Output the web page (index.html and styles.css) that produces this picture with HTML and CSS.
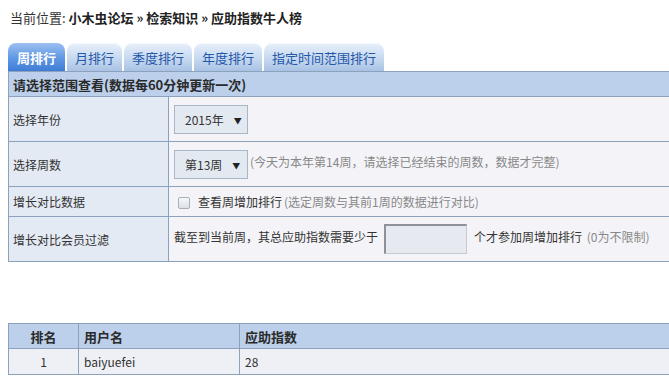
FILE: index.html
```html
<!DOCTYPE html>
<html lang="zh-CN">
<head>
    <meta charset="UTF-8">
    <title>应助指数牛人榜</title>
    <link rel="stylesheet" href="styles.css">
</head>
<body>

<div class="page">
    <div class="crumb">
        当前位置: <b>小木虫论坛 » 检索知识 » 应助指数牛人榜</b>
    </div>

    <ul class="tabs">
        <li class="tab active">周排行</li>
        <li class="tab">月排行</li>
        <li class="tab">季度排行</li>
        <li class="tab">年度排行</li>
        <li class="tab">指定时间范围排行</li>
    </ul>

    <table class="form-table">
        <tr>
            <th colspan="2">请选择范围查看(数据每60分钟更新一次)</th>
        </tr>
        <tr class="tall">
            <td class="label">选择年份</td>
            <td><span class="select">2015年<i>▼</i></span></td>
        </tr>
        <tr class="tall">
            <td class="label">选择周数</td>
            <td><span class="select">第13周<i>▼</i></span><span class="tip">(今天为本年第14周，请选择已经结束的周数，数据才完整)</span></td>
        </tr>
        <tr>
            <td class="label">增长对比数据</td>
            <td><span class="check"></span>查看周增加排行<span class="tip">(选定周数与其前1周的数据进行对比)</span></td>
        </tr>
        <tr class="tall">
            <td class="label">增长对比会员过滤</td>
            <td>截至到当前周，其总应助指数需要少于<span class="input"></span>个才参加周增加排行 <span class="tip">(0为不限制)</span></td>
        </tr>
    </table>

    <table class="rank-table">
        <tr>
            <th class="col-rank">排名</th>
            <th class="col-user">用户名</th>
            <th>应助指数</th>
        </tr>
        <tr>
            <td class="col-rank">1</td>
            <td>baiyuefei</td>
            <td>28</td>
        </tr>
    </table>
</div>

</body>
</html>
```

FILE: styles.css
```css
body {
    margin: 0;
    padding: 0;
    font-family: "Noto Sans CJK SC", "Liberation Sans", sans-serif;
    font-size: 12px;
    color: #333;
    background: #fff;
}

.page {
    width: 900px;
    padding: 8px 8px 0 8px;
}

.crumb {
    padding-left: 2px;
    height: 20px;
    line-height: 20px;
    font-size: 13px;
}

.crumb b {
    color: #222;
}

/* tabs */
.tabs {
    list-style: none;
    margin: 15px 0 0 0;
    padding: 0;
    display: flex;
    gap: 2px;
    font-size: 13px;
}

.tab {
    height: 28px;
    line-height: 29px;
    padding: 0 8px;
    border-radius: 8px 8px 0 0;
    color: #2457a8;
    background: linear-gradient(#e8f0fb, #c3d6ef 60%, #a9c2e4);
    box-shadow: inset 0 1px 0 #f4f8fe;
}

.tab.active {
    padding: 0 9px;
    color: #fff;
    font-weight: bold;
    background: linear-gradient(#9cc0f0, #5e97e4 55%, #3f7dd6);
    box-shadow: none;
}

/* search form */
table {
    border-collapse: collapse;
    width: 100%;
}

.form-table th,
.form-table td,
.rank-table th,
.rank-table td {
    border: 1px solid #8ca2bc;
    text-align: left;
    padding: 0 5px;
}

.form-table th {
    height: 24px;
    font-size: 13px;
    background: #bcd0eb;
    color: #2a2a2a;
    padding-left: 4px;
}

.form-table td {
    height: 29px;
    background: #f4f4f8;
}

.form-table tr.tall td {
    height: 44px;
}

.form-table td.label {
    width: 150px;
    padding-left: 4px;
    background: #e4eaf3;
}

.select {
    display: inline-block;
    vertical-align: middle;
    box-sizing: border-box;
    width: 74px;
    height: 29px;
    line-height: 27px;
    padding-left: 10px;
    border: 1px solid #a9b6c6;
    background: #e3e9f1;
    color: #333;
    font-size: 12px;
}

.select i {
    font-style: normal;
    font-size: 8px;
    vertical-align: 1px;
    margin-left: 10px;
    color: #222;
}

.tip {
    color: #888;
    margin-left: 2px;
}

.check {
    display: inline-block;
    vertical-align: -2px;
    width: 10px;
    height: 10px;
    margin: 0 8px 0 4px;
    border: 1px solid #a8b0bb;
    border-radius: 2px;
    background: linear-gradient(#f6f7f9, #dde1e6);
}

.input {
    display: inline-block;
    vertical-align: middle;
    box-sizing: border-box;
    width: 83px;
    height: 30px;
    margin: 0 7px 0 6px;
    border: 1px solid #c4cbd4;
    border-top: 2px solid #8d9298;
    border-left: 2px solid #8d9298;
    background: #e6eaf0;
}

/* ranking list */
.rank-table {
    margin-top: 61px;
}

.rank-table th {
    height: 24px;
    font-size: 13px;
    background: #bcd0eb;
    color: #2a2a2a;
}

.rank-table td {
    height: 25px;
    background: #eff0f5;
}

.rank-table .col-rank {
    width: 59px;
    text-align: center;
}

.rank-table .col-user {
    width: 150px;
}
```
